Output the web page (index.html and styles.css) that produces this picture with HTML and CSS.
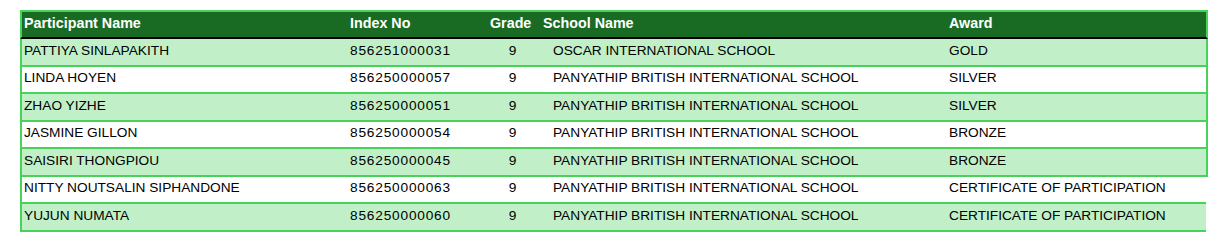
FILE: index.html
```html
<!DOCTYPE html>
<html>
<head>
<meta charset="utf-8">
<link rel="stylesheet" href="styles.css">
</head>
<body>
<div class="table">
  <div class="thead">
    <div class="c c1">Participant Name</div>
    <div class="c c2">Index No</div>
    <div class="c c3">Grade</div>
    <div class="c c4">School Name</div>
    <div class="c c5">Award</div>
  </div>
  <div class="row band">
    <div class="c c1">PATTIYA SINLAPAKITH</div>
    <div class="c c2 num">856251000031</div>
    <div class="c c3">9</div>
    <div class="c c4">OSCAR INTERNATIONAL SCHOOL</div>
    <div class="c c5">GOLD</div>
  </div>
  <div class="row">
    <div class="c c1">LINDA HOYEN</div>
    <div class="c c2 num">856250000057</div>
    <div class="c c3">9</div>
    <div class="c c4">PANYATHIP BRITISH INTERNATIONAL SCHOOL</div>
    <div class="c c5">SILVER</div>
  </div>
  <div class="row band">
    <div class="c c1">ZHAO YIZHE</div>
    <div class="c c2 num">856250000051</div>
    <div class="c c3">9</div>
    <div class="c c4">PANYATHIP BRITISH INTERNATIONAL SCHOOL</div>
    <div class="c c5">SILVER</div>
  </div>
  <div class="row">
    <div class="c c1">JASMINE GILLON</div>
    <div class="c c2 num">856250000054</div>
    <div class="c c3">9</div>
    <div class="c c4">PANYATHIP BRITISH INTERNATIONAL SCHOOL</div>
    <div class="c c5">BRONZE</div>
  </div>
  <div class="row band">
    <div class="c c1">SAISIRI THONGPIOU</div>
    <div class="c c2 num">856250000045</div>
    <div class="c c3">9</div>
    <div class="c c4">PANYATHIP BRITISH INTERNATIONAL SCHOOL</div>
    <div class="c c5">BRONZE</div>
  </div>
  <div class="row open">
    <div class="c c1">NITTY NOUTSALIN SIPHANDONE</div>
    <div class="c c2 num">856250000063</div>
    <div class="c c3">9</div>
    <div class="c c4">PANYATHIP BRITISH INTERNATIONAL SCHOOL</div>
    <div class="c c5">CERTIFICATE OF PARTICIPATION</div>
  </div>
  <div class="row band open">
    <div class="c c1">YUJUN NUMATA</div>
    <div class="c c2 num">856250000060</div>
    <div class="c c3">9</div>
    <div class="c c4">PANYATHIP BRITISH INTERNATIONAL SCHOOL</div>
    <div class="c c5">CERTIFICATE OF PARTICIPATION</div>
  </div>
</div>
</body>
</html>
```

FILE: styles.css
```css
html, body {
  margin: 0;
  padding: 0;
  background: #ffffff;
}

body {
  font-family: "Liberation Sans", Arial, sans-serif;
  color: #000000;
}

.table {
  width: 1188px;
  margin: 10px 0 0 20px;
  display: flex;
  flex-direction: column;
}

.thead,
.row {
  display: grid;
  grid-template-columns: 326px 142px 45px 410px 1fr;
  align-items: center;
}

.thead {
  height: 25px;
  background: #196b24;
  border: 2px solid #47d359;
  border-bottom: 2px solid #000000;
  color: #ffffff;
  font-weight: bold;
  font-size: 14.3px;
}

.thead .c {
  padding-bottom: 4px;
}

.row {
  height: 25.5px;
  border-left: 2px solid #47d359;
  border-right: 2px solid #47d359;
  border-bottom: 2px solid #47d359;
  font-size: 13.7px;
  background: #ffffff;
}

.row .c {
  padding-bottom: 3px;
}

.row.band {
  background: #c1f0c8;
}

.row.open {
  border-right: 0;
  margin-right: 2px;
}

.c {
  white-space: nowrap;
}

.c1 {
  padding-left: 2px;
}

.c2 {
  padding-left: 2px;
}

.num {
  letter-spacing: 0.8px;
}

.thead .c3 {
  text-align: right;
  padding-right: 5px;
}

.row .c3 {
  text-align: center;
}

.thead .c4 {
  padding-left: 8px;
}

.row .c4 {
  padding-left: 18px;
}

.c5 {
  padding-left: 4px;
}
```
